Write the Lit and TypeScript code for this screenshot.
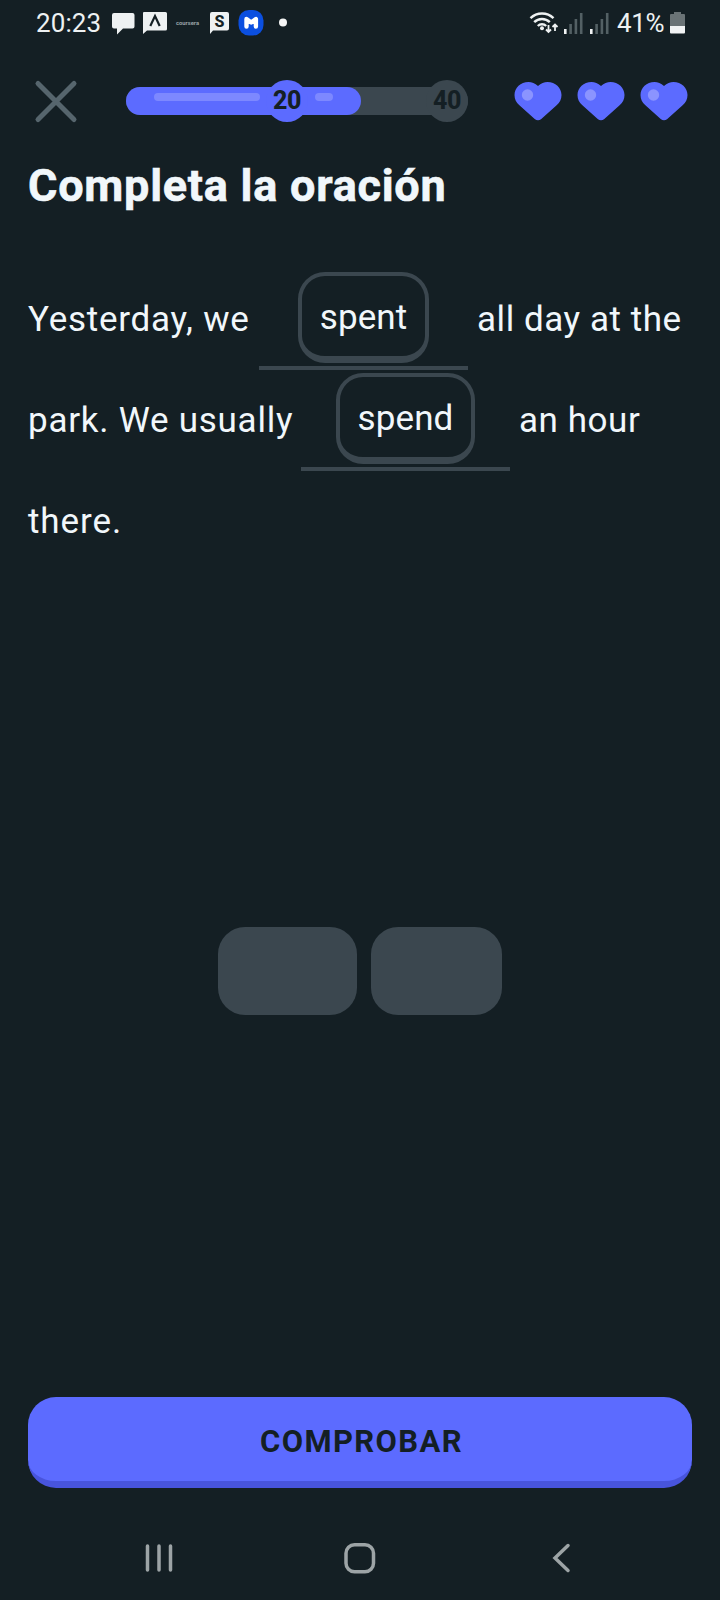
import { LitElement, html, css } from "lit";
import { customElement } from "lit/decorators.js";

@customElement("app-root")
export class AppRoot extends LitElement {
  static styles = css`
    :host {
      display: flex;
      flex-direction: column;
      box-sizing: border-box;
      width: 720px;
      height: 1600px;
      background: #141f24;
      color: #f1f7fb;
      font-family: Roboto, "Noto Sans", sans-serif;
      overflow: hidden;
    }
    svg { display: block; flex: none; overflow: visible; }
    .status {
      display: flex;
      height: 46px;
      padding: 0 35px 0 36px;
      align-items: center;
      justify-content: space-between;
      font-size: 26px;
      line-height: 46px;
      color: #eef1f2;
    }
    .group { display: flex; align-items: center; }
    .clock { width: 75px; letter-spacing: 0.1px; }
    .percent { width: 53px; letter-spacing: -0.4px; }
    .top {
      display: flex;
      align-items: center;
      height: 42px;
      margin-top: 34px;
      padding: 0 32px 0 36px;
    }
    .track {
      position: relative;
      width: 342px;
      height: 28px;
      margin: 0 46px 0 50px;
      border-radius: 14px;
      background: #3b474f;
    }
    .fill {
      display: flex;
      box-sizing: border-box;
      gap: 55px;
      width: 235px;
      height: 28px;
      padding: 6px 0 0 28px;
      border-radius: 14px;
      background: #5c6bff;
    }
    .shine { height: 8px; border-radius: 4px; background: #7d88ff; }
    .shine.long { width: 106px; }
    .shine.short { width: 18px; }
    .mark {
      position: absolute;
      top: -7px;
      width: 42px;
      height: 42px;
      border-radius: 50%;
      background: #3b474f;
      color: #141f24;
      font-size: 25px;
      font-weight: 800;
      letter-spacing: -0.5px;
      line-height: 42px;
      text-align: center;
    }
    .mark.reached { left: 140px; background: #5c6bff; }
    .mark.goal { right: 0; }
    .hearts { display: flex; gap: 15px; }
    .title {
      margin: 37px 0 0 28px;
      font-size: 45px;
      font-weight: 700;
      line-height: 54px;
      letter-spacing: 0.75px;
      -webkit-text-stroke: 0.6px #f1f7fb;
      white-space: nowrap;
    }
    .sentence { margin: 56px 0 0 28px; font-size: 35px; }
    .line { display: flex; height: 101px; line-height: 101px; white-space: pre; letter-spacing: 0.75px; }
    .blank {
      display: flex;
      box-sizing: border-box;
      width: 209px;
      height: 101px;
      padding-top: 3px;
      justify-content: center;
      border-bottom: 4px solid #3b474f;
    }
    .tile {
      box-sizing: border-box;
      height: 91px;
      border: 4px solid #3b474f;
      border-bottom-width: 7px;
      border-radius: 27px;
      text-align: center;
      line-height: 84px;
      letter-spacing: 0.1px;
    }
    .w1 { width: 131px; }
    .w2 { width: 139px; }
    .run1 { width: 231px; }
    .run2 { width: 273px; }
    .after { margin-left: 9px; letter-spacing: 0.55px; }
    .last { letter-spacing: 0.9px; }
    .bank { display: flex; justify-content: center; gap: 14px; margin-top: 355px; }
    .slot { height: 88px; border-radius: 27px; background: #3b474f; }
    .check {
      box-sizing: border-box;
      height: 91px;
      margin: 382px 28px 0;
      border: 0;
      border-bottom: 7px solid #4854dc;
      border-radius: 28px;
      background: #5c6bff;
      color: #141f24;
      font: 700 31px/84px Roboto, sans-serif;
      letter-spacing: 1.4px;
      padding: 3px 0 0 3px;
    }
    .nav { display: flex; margin-top: 54px; padding-left: 145px; }
    .nav .home { margin-left: 171px; }
    .nav .back { margin-left: 177px; }
  `;

  private signal() {
    return html`<svg width="19" height="21" viewBox="0 0 19 21">
      <rect x="0" y="16" width="2.6" height="5" fill="#f1f3f4" />
      <g fill="#536064">
        <rect x="5.3" y="11" width="2.6" height="10" />
        <rect x="10.6" y="6" width="2.6" height="15" />
        <rect x="15.9" y="0" width="2.6" height="21" />
      </g>
    </svg>`;
  }

  private heart() {
    return html`<svg width="48" height="40" viewBox="0 0 48 40">
      <path fill="#5c6bff" d="M24 5C21 2 17.800.900 14.500.900 6.600.900.500 6.500.500 14c0 4.300 1.800 7.400 4.600 10L20.700 37.900c2 1.800 4.600 1.800 6.600 0L42.900 24c2.800-2.600 4.600-5.700 4.600-10C47.500 6.500 41.400.900 33.500.900 30.200.900 27 2 24 5Z" />
      <circle cx="13.500" cy="14" r="5.700" fill="#8b94ff" />
    </svg>`;
  }

  render() {
    return html`
      <div class="status">
        <div class="group">
          <span class="clock">20:23</span>
          <svg width="176" height="26" viewBox="111 10 176 26">
            <path fill="#eef1f2" d="M114 13h18.500a2 2 0 0 1 2 2v11.500a2 2 0 0 1-2 2H123l-6 6v-6h-3a2 2 0 0 1-2-2V15a2 2 0 0 1 2-2Z" />
            <path fill="#eef1f2" d="M144 12h21.500a1.500 1.500 0 0 1 1.500 1.500v15.500a1.500 1.500 0 0 1-1.500 1.500H147l-4 3.500V13a1 1 0 0 1 1-1Z" />
            <path fill="none" stroke="#141f24" stroke-width="2.200" d="m150.300 26 4.700-10 4.700 10" />
            <text x="176" y="24.800" font-size="5.500" font-weight="700" textLength="23" lengthAdjust="spacingAndGlyphs" fill="#98a1a4">coursera</text>
            <path fill="#eef1f2" d="M212 12h15a2 2 0 0 1 2 2v14.500a2 2 0 0 1-2 2h-14L210 34V14a2 2 0 0 1 2-2Z" />
            <text x="219.500" y="27" font-size="16" font-weight="800" text-anchor="middle" fill="#141f24">S</text>
            <rect x="238.500" y="10" width="25" height="25.500" rx="10.500" fill="#0b4fe0" />
            <path fill="none" stroke="#fff" stroke-width="4.400" stroke-linecap="round" stroke-linejoin="round" d="M246.500 26.500v-7.500l4.700 3.500 4.700-3.500v7.500" />
            <circle cx="283" cy="22.500" r="4" fill="#f4f5f5" />
          </svg>
        </div>
        <div class="group">
          <svg width="34" height="22" viewBox="530 12 34 22" fill="none" stroke="#eef1f2" stroke-width="2.400">
            <path d="M530.500 18.200a16.500 16.500 0 0 1 23 0M534.200 22.200a11 11 0 0 1 15.600 0M537.800 26a6 6 0 0 1 8.400 0" />
            <circle cx="542" cy="28.300" r="2" fill="#eef1f2" stroke="none" />
            <path stroke-width="1.800" d="M548.500 25v7m-2.500-2.500 2.500 2.500 2.500-2.500M555 31v-6.500m-2.500 2.500 2.500-2.500 2.500 2.500" />
          </svg>
          ${this.signal()}
          <svg width="7" height="1"></svg>
          ${this.signal()}
          <svg width="8" height="1"></svg>
          <span class="percent">41%</span>
          <svg width="15" height="22" viewBox="0 0 15 22">
            <path fill="#6a7376" d="M4 0h7v2h3a1 1 0 0 1 1 1v11H0V3a1 1 0 0 1 1-1h3Z" />
            <path fill="#f1f3f4" d="M0 14h15v6.500a1 1 0 0 1-1 1H1a1 1 0 0 1-1-1Z" />
          </svg>
        </div>
      </div>
      <div class="top">
        <svg width="40" height="40" viewBox="0 0 40 40" stroke="#56656d" stroke-width="5" stroke-linecap="round">
          <path d="M2 2.500l36 36M38 2.500 2 38.500" />
        </svg>
        <div class="track">
          <div class="fill"><div class="shine long"></div><div class="shine short"></div></div>
          <div class="mark reached">20</div>
          <div class="mark goal">40</div>
        </div>
        <div class="hearts">${this.heart()}${this.heart()}${this.heart()}</div>
      </div>
      <h1 class="title">Completa la oración</h1>
      <div class="sentence">
        <div class="line">
          <span class="run1">Yesterday, we</span>
          <span class="blank"><span class="tile w1">spent</span></span>
          <span class="after">all day at the</span>
        </div>
        <div class="line">
          <span class="run2">park. We usually</span>
          <span class="blank"><span class="tile w2">spend</span></span>
          <span class="after">an hour</span>
        </div>
        <div class="line"><span class="last">there.</span></div>
      </div>
      <div class="bank"><div class="slot w2"></div><div class="slot w1"></div></div>
      <button class="check">COMPROBAR</button>
      <div class="nav">
        <svg width="28" height="32" viewBox="0 0 28 32" stroke="#9da4a6" stroke-width="3.500" stroke-linecap="round">
          <path d="M2.500 4v24M14 4v24M25.500 4v24" />
        </svg>
        <svg class="home" width="32" height="32" viewBox="0 0 32 32" fill="none" stroke="#9da4a6" stroke-width="3.500">
          <rect x="2" y="2.800" width="27.500" height="27" rx="8.500" />
        </svg>
        <svg class="back" width="18" height="32" viewBox="0 0 18 32" fill="none" stroke="#9da4a6" stroke-width="3.500" stroke-linecap="round">
          <path d="M15 3.500 2 16l13 12.500" />
        </svg>
      </div>
    `;
  }
}
